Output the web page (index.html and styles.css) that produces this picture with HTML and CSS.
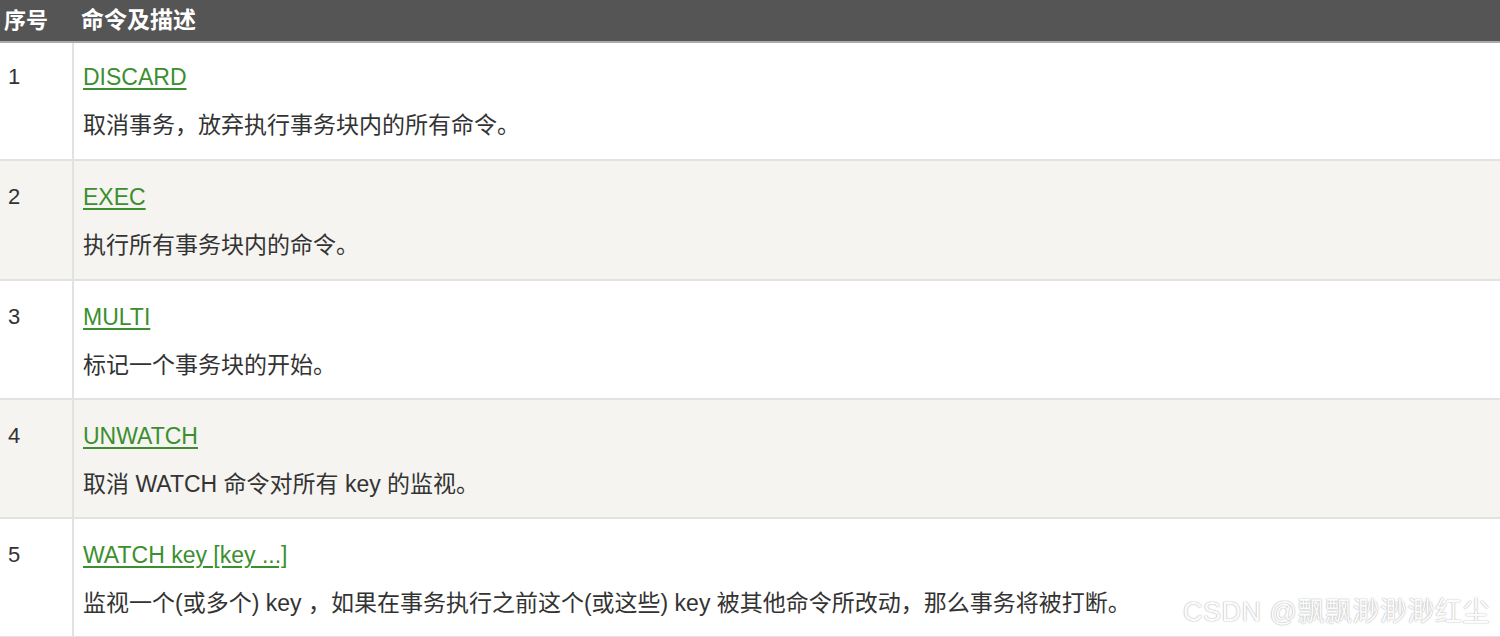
FILE: index.html
```html
<!DOCTYPE html>
<html lang="zh">
<head>
<meta charset="utf-8">
<link rel="stylesheet" href="styles.css">
</head>
<body>
<div class="page">
<table class="cmds">
  <thead>
    <tr><th class="num">序号</th><th class="desc">命令及描述</th></tr>
  </thead>
  <tbody>
    <tr><td class="num">1</td><td class="desc"><p><a href="#">DISCARD</a></p><p>取消事务，放弃执行事务块内的所有命令。</p></td></tr>
    <tr class="alt"><td class="num">2</td><td class="desc"><p><a href="#">EXEC</a></p><p>执行所有事务块内的命令。</p></td></tr>
    <tr><td class="num">3</td><td class="desc"><p><a href="#">MULTI</a></p><p>标记一个事务块的开始。</p></td></tr>
    <tr class="alt"><td class="num">4</td><td class="desc"><p><a href="#">UNWATCH</a></p><p>取消 WATCH 命令对所有 key 的监视。</p></td></tr>
    <tr><td class="num">5</td><td class="desc"><p><a href="#">WATCH key [key ...]</a></p><p>监视一个(或多个) key ，如果在事务执行之前这个(或这些) key 被其他命令所改动，那么事务将被打断。</p></td></tr>
  </tbody>
</table>
<div class="watermark">CSDN @飘飘渺渺渺红尘</div>
</div>
</body>
</html>
```
FILE: styles.css
```css
html, body {
  margin: 0;
  padding: 0;
  background: #fff;
}
.page {
  position: relative;
  width: 1500px;
  height: 637px;
  overflow: hidden;
  font-family: "Liberation Sans", "Noto Sans CJK SC", sans-serif;
  color: #333;
}
.cmds {
  width: 1500px;
  border-collapse: collapse;
  font-size: 23px;
}
.cmds thead th {
  background: #555;
  color: #fff;
  font-weight: bold;
  text-align: left;
  height: 41px;
  padding: 0;
  line-height: 41px;
  border-bottom: 2px solid #aaa;
}
.cmds thead th.num {
  padding-left: 4px;
  width: 69px;
  font-size: 22px;
}
.cmds thead th.desc {
  padding-left: 8px;
}
.cmds tbody tr {
  height: 119px;
  border-bottom: 2px solid #e2e2e2;
}
.cmds tbody tr:nth-child(1) {
  height: 118px;
}
.cmds tbody tr:nth-child(2) {
  height: 120px;
}
.cmds tbody tr:nth-child(5) {
  height: 117px;
}
.cmds tbody tr.alt {
  background: #f5f4f0;
}
.cmds td {
  vertical-align: top;
  padding: 0;
}
.cmds td.num {
  width: 64px;
  padding: 21px 0 0 8px;
  line-height: 30px;
  font-size: 22px;
  border-right: 2px solid #e2e2e2;
}
.cmds td.desc {
  padding: 21px 0 18px 9px;
}
.cmds tbody tr:first-child td {
  padding-top: 19px;
}
.cmds td.desc p {
  margin: 0;
  line-height: 30px;
}
.cmds td.desc p + p {
  margin-top: 18px;
}
.cmds a {
  color: #3c8f2f;
  text-decoration: underline;
  text-underline-offset: 3px;
}
.watermark {
  position: absolute;
  right: 10px;
  top: 590px;
  font-size: 27px;
  color: #fcfcfc;
  text-shadow: 0 0 1px #aaa, 0 0 2px #ccc;
  letter-spacing: 0.5px;
}
```
